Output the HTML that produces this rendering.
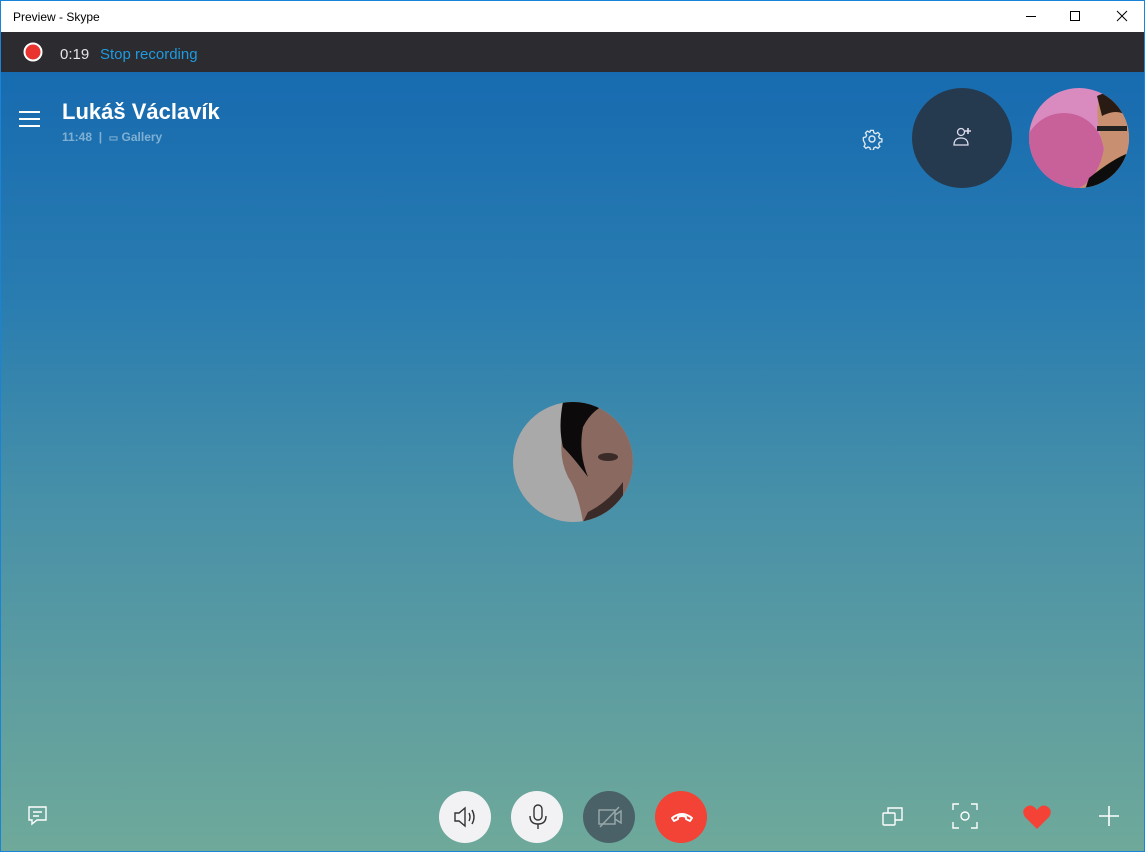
<!DOCTYPE html>
<html><head><meta charset="utf-8"><style>
*{margin:0;padding:0;box-sizing:border-box}
body{width:1145px;height:852px;overflow:hidden;font-family:"Liberation Sans",sans-serif;background:#1883d7;position:relative}
#title{position:absolute;left:1px;top:1px;width:1143px;height:31px;background:#fff;font-size:12px;color:#000}
#title .t{position:absolute;left:12px;top:9px}
#rec{position:absolute;left:1px;top:32px;width:1143px;height:40px;background:#2b2b30}
#main{position:absolute;left:1px;top:72px;width:1143px;height:779px;background:linear-gradient(#176bb0 0%,#2a7db0 30%,#4790a8 55%,#5f9ea0 80%,#6ea99a 100%)}
.w{position:absolute;color:#fff}
.cb{position:absolute;border-radius:50%;width:52px;height:52px;top:719px}
</style></head><body>
<div id="title"><span class="t">Preview - Skype</span>
<svg style="position:absolute;left:1010px;top:0" width="130" height="31" stroke="#000" fill="none" stroke-width="1">
<line x1="15" y1="15.5" x2="25" y2="15.5"/><rect x="59.5" y="10.5" width="9" height="9"/><line x1="106" y1="10" x2="116" y2="20"/><line x1="116" y1="10" x2="106" y2="20"/></svg>
</div>
<div id="rec">
<svg style="position:absolute;left:22px;top:10px" width="20" height="20"><circle cx="10" cy="10" r="8.5" fill="#e8332f" stroke="#fff" stroke-width="2"/></svg>
<span style="position:absolute;left:59px;top:14px;font-size:15px;color:#e6e6e6">0:19</span>
<span style="position:absolute;left:99px;top:14px;font-size:15px;color:#1e9be0">Stop recording</span>
</div>
<div id="main">
<svg style="position:absolute;left:18px;top:38px" width="22" height="18" stroke="#fff" stroke-width="2"><line x1="0" y1="2" x2="21" y2="2"/><line x1="0" y1="9" x2="21" y2="9"/><line x1="0" y1="16" x2="21" y2="16"/></svg>
<div class="w" style="left:61px;top:27px;font-size:22px;font-weight:bold">Lukáš Václavík</div>
<div class="w" style="left:61px;top:58px;font-size:12px;font-weight:bold;color:#7fb0d3">11:48 &nbsp;| &nbsp;<span style="font-size:10px">▭</span> Gallery</div>
<svg style="position:absolute;left:860px;top:56px" width="22" height="22" fill="none" stroke="#dfe9f2" stroke-width="1.4"><circle cx="11" cy="11" r="3"/><path d="M9.5 2h3l.5 2.5 2 1 2.3-1.3 2 2-1.3 2.3 1 2 2.5.5v3l-2.5.5-1 2 1.3 2.3-2 2-2.3-1.3-2 1-.5 2.5h-3l-.5-2.5-2-1-2.3 1.3-2-2 1.3-2.3-1-2L2 12.5v-3l2.5-.5 1-2L4.2 4.7l2-2L8.5 4l.5-.3z" transform="scale(.95) translate(.5 .5)"/></svg>
<div style="position:absolute;left:911px;top:16px;width:100px;height:100px;border-radius:50%;background:#263a4f"></div>
<svg style="position:absolute;left:950px;top:54px" width="24" height="22" fill="none" stroke="#dde" stroke-width="1.3"><circle cx="10" cy="6" r="3.5"/><path d="M3 19c0-5 3-7 7-7s7 2 7 7z"/><path d="M17 2v6M14 5h6" stroke-width="1.6"/></svg>
<svg style="position:absolute;left:1028px;top:16px" width="100" height="100"><defs><clipPath id="c1"><circle cx="50" cy="50" r="50"/></clipPath></defs><g clip-path="url(#c1)"><rect width="100" height="100" fill="#d98bc0"/><circle cx="35" cy="65" r="40" fill="#c8609a"/><path d="M70 10 q20 -5 30 10 v80 h-50 q20-10 25-40 q-10-30 -5-50z" fill="#c89070"/><path d="M68 8 q15-8 30 5 l0 15 q-10-8-25 0z" fill="#2a1a14"/><path d="M60 90 q25-20 40-25 v40 h-45z" fill="#0d0d0d"/><rect x="68" y="38" width="30" height="5" fill="#222"/></g></svg>
<svg style="position:absolute;left:512px;top:330px" width="120" height="120"><defs><clipPath id="c2"><circle cx="60" cy="60" r="60"/></clipPath></defs><g clip-path="url(#c2)"><rect width="120" height="120" fill="#a9a9a9"/><path d="M50 0 h70 v120 h-50 q-5-30-15-45 q-10-20-5-45z" fill="#8a6a60"/><path d="M50 0 h50 q-20 5-30 25 q-5 25 5 50 q-15-20-25-30 q-5-20 0-45z" fill="#0c0a0a"/><path d="M75 110 q20-10 35-30 v40 h-40z" fill="#3a2a28"/><ellipse cx="95" cy="55" rx="10" ry="4" fill="#3a2a28"/></g></svg>
<svg style="position:absolute;left:26px;top:733px" width="22" height="22" fill="none" stroke="#fff" stroke-width="1.4"><path d="M2 2h17v13h-9l-5 4v-4h-3z"/><path d="M6 7h9M6 11h6"/></svg>
<div class="cb" style="left:438px;background:#f2f2f4"></div>
<svg style="position:absolute;left:451px;top:732px" width="28" height="26" fill="none" stroke="#333" stroke-width="1.4"><path d="M3 9h4l6-5v18l-6-5H3z"/><path d="M17 9q2 4 0 8M20 6q4 7 0 14"/></svg>
<div class="cb" style="left:510px;background:#f2f2f4"></div>
<svg style="position:absolute;left:524px;top:731px" width="26" height="30" fill="none" stroke="#333" stroke-width="1.4"><rect x="9" y="2" width="8" height="15" rx="4"/><path d="M5 13q0 8 8 8t8-8M13 21v5"/></svg>
<div class="cb" style="left:582px;background:#4b6168"></div>
<svg style="position:absolute;left:596px;top:733px" width="28" height="24" fill="none" stroke="#9aa" stroke-width="1.4"><rect x="2" y="5" width="16" height="14"/><path d="M18 10l6-4v12l-6-4"/><path d="M3 22L22 2"/></svg>
<div class="cb" style="left:654px;background:#f34236"></div>
<svg style="position:absolute;left:668px;top:737px" width="26" height="16" fill="none" stroke="#fff" stroke-width="2"><path d="M3 9q10-8 20 0l-2 3-4-2v-2q-4-2-8 0v2l-4 2z" stroke-linejoin="round"/></svg>
<svg style="position:absolute;left:880px;top:733px" width="24" height="22" fill="none" stroke="#fff" stroke-width="1.4"><rect x="2" y="8" width="12" height="12" rx="1"/><path d="M7 8V3h14v12h-7"/></svg>
<svg style="position:absolute;left:951px;top:731px" width="26" height="26" fill="none" stroke="#fff" stroke-width="1.4"><path d="M1 7V1h6M19 1h6v6M25 19v6h-6M7 25H1v-6"/><circle cx="13" cy="13" r="4"/></svg>
<svg style="position:absolute;left:1021px;top:732px" width="30" height="26"><path d="M15 25L3 13Q-1 7 4 3 10 -1 15 6 20 -1 26 3 31 7 27 13z" fill="#f44336"/></svg>
<svg style="position:absolute;left:1096px;top:732px" width="24" height="24" stroke="#fff" stroke-width="1.6"><path d="M12 2v20M2 12h20"/></svg>
</div>
</body></html>
